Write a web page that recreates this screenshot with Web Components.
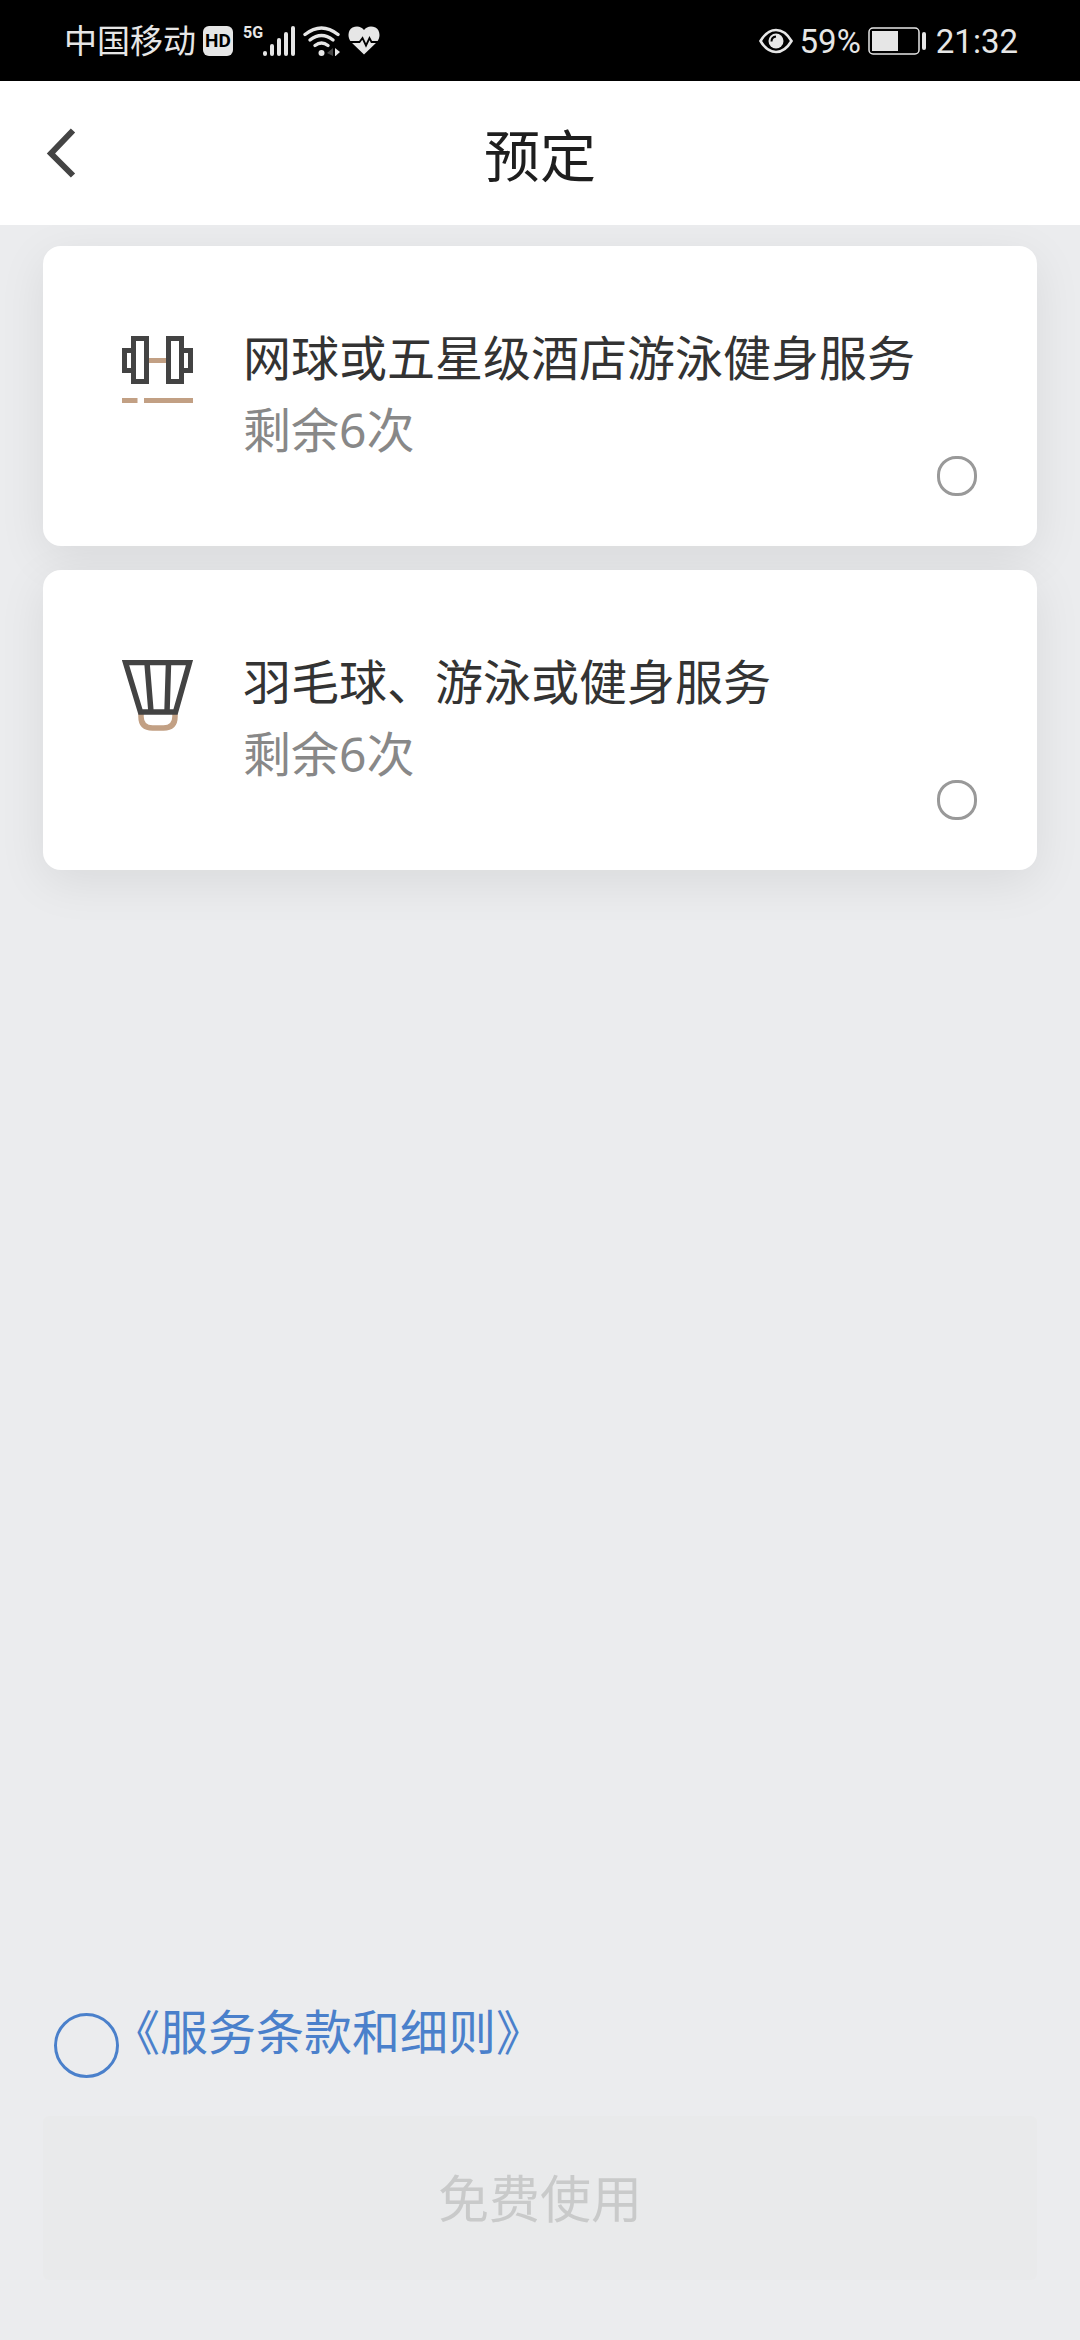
<!DOCTYPE html>
<html lang="zh-CN">
<head>
<meta charset="utf-8">
<meta name="viewport" content="width=device-width, initial-scale=1">
<title>预定</title>
<style>
  html, body { margin: 0; height: 100%; }
  body {
    background: #ebecee;
    color: #333;
    font-family: "Noto Sans", "Noto Sans CJK SC", sans-serif;
  }
</style>
</head>
<body>
<booking-page>
  <status-bar slot="status" carrier="中国移动" battery="59" time="21:32"></status-bar>
  <nav-bar slot="nav">预定</nav-bar>
  <service-card value="gym">
    <dumbbell-icon slot="icon"></dumbbell-icon>
    网球或五星级酒店游泳健身服务
    <span slot="remaining">剩余6次</span>
  </service-card>
  <service-card value="badminton">
    <shuttlecock-icon slot="icon"></shuttlecock-icon>
    羽毛球、游泳或健身服务
    <span slot="remaining">剩余6次</span>
  </service-card>
  <terms-consent slot="footer">《服务条款和细则》</terms-consent>
  <submit-button slot="footer">免费使用</submit-button>
</booking-page>

<script>
const define = (name, html, setup) => {
  const template = document.createElement('template');
  template.innerHTML = html;
  customElements.define(name, class extends HTMLElement {
    constructor() {
      super();
      this.attachShadow({ mode: 'open' }).append(template.content.cloneNode(true));
    }
    connectedCallback() {
      if (setup) setup(this, this.shadowRoot);
    }
  });
};

define('booking-page', `
  <style>
    :host { display: flex; flex-direction: column; min-height: 100vh; }
    main { flex: 1; display: flex; flex-direction: column; gap: 24px; padding: 21px 43px; overflow: hidden; }
    footer { display: flex; flex-direction: column; gap: 38px; padding: 0 43px 60px; }
  </style>
  <slot name="status"></slot>
  <slot name="nav"></slot>
  <main><slot></slot></main>
  <footer><slot name="footer"></slot></footer>
`);

define('status-bar', `
  <style>
    :host {
      display: flex; align-items: center; justify-content: space-between;
      height: 81px; padding: 0 62px 0 64px;
      background: #000; color: #e6e6e6;
      font: 33px/40px Roboto, "Noto Sans CJK SC", sans-serif;
    }
    div { display: flex; align-items: center; }
    svg { display: block; fill: currentColor; }
    .left { gap: 7px; }
    .right { gap: 7px; }
    .carrier, .battery, .time { padding-top: 2px; }
    .hd {
      width: 30px; height: 30px; border-radius: 6px;
      background: #e6e6e6; color: #000;
      font-size: 19px; line-height: 30px; font-weight: 700; text-align: center;
    }
    .net { align-items: flex-start; height: 30px; padding-left: 3px; }
    .gen { font: 700 16px/14px "Liberation Sans Narrow", Roboto, sans-serif; }
  </style>
  <div class="left">
    <span class="carrier"></span>
    <span class="hd">HD</span>
    <div class="net">
      <span class="gen">5G</span>
      <svg width="33" height="30" viewBox="0 0 33 30" aria-hidden="true">
        <rect x="0" y="25" width="4" height="5" rx="2"/>
        <rect x="7" y="18" width="4" height="12" rx="2"/>
        <rect x="14" y="12" width="4" height="18" rx="2"/>
        <rect x="21" y="6" width="4" height="24" rx="2"/>
        <rect x="28" y="0" width="4" height="30" rx="2"/>
      </svg>
    </div>
    <svg width="38" height="30" viewBox="0 0 38 30" aria-hidden="true">
      <g fill="none" stroke="currentColor" stroke-width="3.4" stroke-linecap="round">
        <path d="M2 8.500Q18.500-4.500 35 8.500"/>
        <path d="M7 14Q18.500 5 30 14"/>
        <path d="M12 19.500Q18.500 14.500 25 19.500"/>
      </g>
      <circle cx="18.500" cy="27" r="3"/>
      <path d="M24 27l6-5v8z" fill="#444"/>
      <path d="M32 22l5 4-5 4.500z"/>
    </svg>
    <svg width="32" height="29" viewBox="0 0 32 29" aria-hidden="true">
      <path d="M16 28.500L3 16C-1 11 0 4 4.500 1.500 9-.700 13.500.500 16 4 18.500.500 23-.700 27.500 1.500 32 4 33 11 29 16z"/>
      <path d="M0 16H11.500l3-4 3.500 7.500 3.500-7.500 2 4H32" fill="none" stroke="#000" stroke-width="1.800"/>
    </svg>
  </div>
  <div class="right">
    <svg width="34" height="26" viewBox="0 0 34 26" aria-hidden="true">
      <path d="M1.500 13Q8 2 17 2T32.500 13Q26 24 17 24T1.500 13z" fill="none" stroke="currentColor" stroke-width="2.600"/>
      <circle cx="17" cy="13" r="7.500"/>
      <path d="M12.500 13.500Q12.500 9 17 8.500" fill="none" stroke="#000" stroke-width="2"/>
    </svg>
    <span class="battery"></span>
    <svg width="61" height="28" viewBox="0 0 61 28" aria-hidden="true">
      <rect x="1" y="1" width="50" height="26" rx="4" fill="none" stroke="currentColor" stroke-width="1.500"/>
      <rect x="4" y="4" width="26" height="20"/>
      <rect x="54" y="5" width="4" height="18" rx="2"/>
    </svg>
    <span class="time"></span>
  </div>
`, (host, root) => {
  root.querySelector('.carrier').textContent = host.getAttribute('carrier');
  root.querySelector('.battery').textContent = host.getAttribute('battery') + '%';
  root.querySelector('.time').textContent = host.getAttribute('time');
});

define('nav-bar', `
  <style>
    :host {
      display: grid; grid-template-columns: 120px 1fr 120px; align-items: center;
      height: 144px; background: #fff; color: #1e1e1e;
    }
    button { display: flex; align-items: center; height: 144px; padding: 0 0 0 46px; border: 0; background: none; }
    h1 { margin: 0; padding-top: 4px; font-size: 56px; line-height: 80px; font-weight: 400; text-align: center; }
  </style>
  <button type="button" aria-label="返回">
    <svg width="32" height="50" viewBox="0 0 32 50" aria-hidden="true">
      <path d="M27 2.500L5 25.500l22 22" fill="none" stroke="#444" stroke-width="6"/>
    </svg>
  </button>
  <h1><slot></slot></h1>
`);

define('service-card', `
  <style>
    :host { display: block; }
    label {
      display: flex; align-items: flex-start;
      padding: 76px 60px 50px 79px;
      min-height: 174px;
      border-radius: 18px; background: #fff;
      box-shadow: 0 12px 48px rgba(0, 0, 0, .08);
      font-size: 48px; line-height: 72px;
    }
    .icon { display: block; padding-top: 14px; }
    .text { flex: 1; display: flex; flex-direction: column; padding-left: 50px; white-space: nowrap; }
    .remaining { color: #888; }
    input {
      appearance: none; align-self: flex-end; box-sizing: border-box;
      width: 40px; height: 40px; margin: 0 0 0 -40px;
      border: 3px solid #999; border-radius: 19px; background: #fff;
    }
    input:checked { background: #4a80cb; }
  </style>
  <label>
    <span class="icon"><slot name="icon"></slot></span>
    <span class="text">
      <span><slot></slot></span>
      <span class="remaining"><slot name="remaining"></slot></span>
    </span>
    <input type="radio" name="service">
  </label>
`, (host, root) => {
  root.querySelector('input').value = host.getAttribute('value');
});

define('dumbbell-icon', `
  <style>:host, svg { display: block; }</style>
  <svg width="71" height="71" viewBox="0 0 71 71" aria-hidden="true">
    <g fill="none" stroke="#434343" stroke-width="5">
      <path d="M11.500 2.500h13v43h-13z"/>
      <path d="M46.500 2.500h13v43h-13z"/>
      <path d="M9 14.500H2.500v20H9M62 14.500h6.500v20H62"/>
    </g>
    <path d="M27 24.500h17M0 64.500h15.500M22 64.500h49" fill="none" stroke="#c2a084" stroke-width="5"/>
  </svg>
`);

define('shuttlecock-icon', `
  <style>:host, svg { display: block; }</style>
  <svg width="71" height="71" viewBox="0 0 71 71" aria-hidden="true">
    <path d="M19 54v2.500q0 11.500 11.500 11.500h11q11.500 0 11.500-11.500V54" fill="none" stroke="#c2a084" stroke-width="5.500"/>
    <path d="M3.500 2.500h64L53.500 52h-35zM25 3l4 49M46.500 3l-1.500 49" fill="none" stroke="#434343" stroke-width="5.500"/>
  </svg>
`);

define('terms-consent', `
  <style>
    :host { display: flex; align-items: flex-end; padding-left: 11px; }
    input {
      appearance: none; box-sizing: border-box; width: 65px; height: 65px; margin: 0;
      border: 3px solid #4a80cb; border-radius: 50%; background: transparent;
    }
    input:checked { background: #4a80cb; }
    a { padding-bottom: 10px; margin-left: -7px; color: #4a80cb; font-size: 48px; line-height: 72px; text-decoration: none; }
  </style>
  <input type="checkbox" id="agree" aria-labelledby="terms">
  <a id="terms" href="#terms"><slot></slot></a>
`);

define('submit-button', `
  <style>
    :host { display: block; }
    button {
      display: block; width: 100%; padding: 46px 0; border: 0; border-radius: 6px;
      background: #e9eaeb; color: #c9caca;
      font: inherit; font-size: 51px; line-height: 72px;
    }
  </style>
  <button type="button" disabled><slot></slot></button>
`);
</script>
</body>
</html>
